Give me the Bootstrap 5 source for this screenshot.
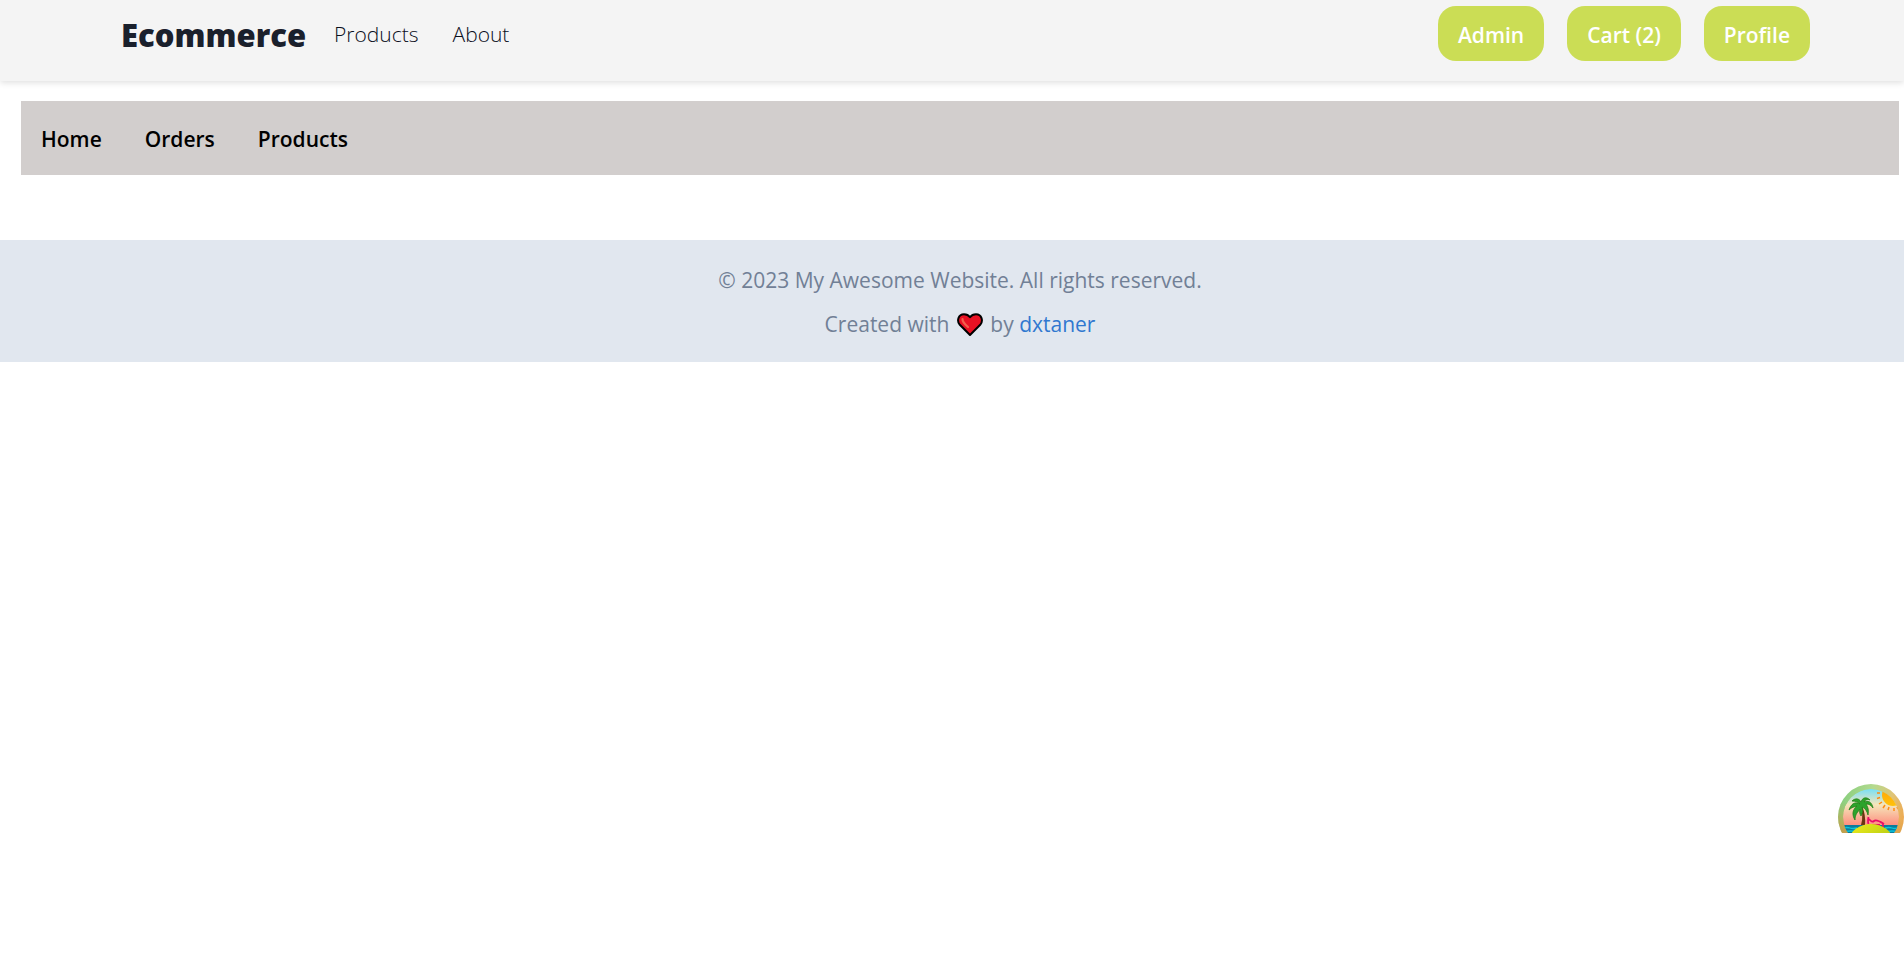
<!DOCTYPE html>
<html lang="en">
<head>
<meta charset="utf-8">
<meta name="viewport" content="width=device-width, initial-scale=1">
<title>Ecommerce</title>
<link href="https://cdn.jsdelivr.net/npm/bootstrap@5.3.0/dist/css/bootstrap.min.css" rel="stylesheet">
<style>
  body { font-family: "Open Sans", "Noto Sans", sans-serif; font-size: 21px; line-height: 30px; background: #fff; }
  a { text-decoration: none; }
  .site-header { background: #f4f4f4; box-shadow: 0 2px 6px rgba(0, 0, 0, .12); padding: 6px 94px 17px 121px; min-height: 81px; }
  .site-header .navbar-brand { font-size: 31px; line-height: 58px; font-weight: 800; color: #1a202c; padding: 0; margin: 0 20px 0 0; }
  .site-header .nav-link { color: #0b0f1c; font-weight: 300; line-height: 57px; padding: 0; }
  .main-links { gap: 18px; }
  .header-actions { gap: 23px; }
  .btn-lime { background: #cbdd55; color: #fff; font-size: 21px; line-height: 31px; font-weight: 600; border: 0; border-radius: 18px; padding: 14px 20px 10px; }
  .btn-lime:hover { background: #bccf45; color: #fff; }
  .admin-bar { background: #d2cecd; margin: 20px 5px 65px 21px; padding: 23px 20px 21px; gap: 43px; }
  .admin-bar a { color: #000; font-weight: 600; }
  .site-footer { background: #e1e7ef; color: #718096; padding: 25px 5px 22px 21px; }
  .site-footer p { margin: 0 0 13px; line-height: 31px; }
  .site-footer a { color: #3078d0; }
  .heart { width: 26px; height: 24px; margin: 0 2px; vertical-align: -5px; }
  .palm-toggle { right: 0; bottom: 133px; width: 66px; height: 49px; overflow: hidden; border: 0; padding: 0; background: none; }
</style>
</head>
<body>
<header>
  <nav class="site-header navbar navbar-expand d-flex align-items-start" aria-label="Main">
    <a class="navbar-brand" href="#">Ecommerce</a>
    <div class="main-links navbar-nav me-auto">
      <a class="nav-link" href="#">Products</a>
      <a class="nav-link" href="#">About</a>
    </div>
    <div class="header-actions d-flex">
      <button type="button" class="btn btn-lime">Admin</button>
      <button type="button" class="btn btn-lime">Cart (2)</button>
      <button type="button" class="btn btn-lime">Profile</button>
    </div>
  </nav>
</header>
<main>
  <nav class="admin-bar d-flex" aria-label="Admin">
    <a href="#">Home</a>
    <a href="#">Orders</a>
    <a href="#">Products</a>
  </nav>
</main>
<footer class="site-footer text-center">
  <p>© 2023 My Awesome Website. All rights reserved.</p>
  <p class="mb-0">Created with <svg class="heart" viewBox="0 0 26 24" role="img" aria-label="love"><path d="M13 22 2.800 11.800C-.5 8 1.200 1.300 7 1.300c2.500 0 4.600 1 6 3 1.400-2 3.500-3 6-3 5.800 0 7.500 6.700 4.200 10.500Z" fill="#e81123" stroke="#000" stroke-width="2" stroke-linejoin="round"/><path d="M5.500 6c-.2 3 2.500 5.500 5.500 8" fill="none" stroke="#f2604c" stroke-width="2.200" stroke-linecap="round"/></svg> by <a href="#">dxtaner</a></p>
</footer>

<button type="button" class="palm-toggle position-fixed" aria-label="Open developer tools">
  <svg class="d-block" width="66" height="49" viewBox="0 0 66 49" aria-hidden="true">
    <defs>
      <linearGradient id="rim" x1="0" y1=".2" x2="1" y2=".5"><stop offset="0" stop-color="#83cd7c"/><stop offset=".45" stop-color="#b4da8f"/><stop offset=".75" stop-color="#e0c477"/><stop offset="1" stop-color="#edaa52"/></linearGradient>
      <linearGradient id="rimleft" x1=".3" y1="0" x2="0" y2="1"><stop offset=".3" stop-color="#c8a04a" stop-opacity="0"/><stop offset=".7" stop-color="#cb9440" stop-opacity=".8"/></linearGradient>
      <linearGradient id="sky" x1="0" y1="0" x2="0" y2="1"><stop offset="0" stop-color="#78dff5"/><stop offset=".28" stop-color="#f5e6bb"/><stop offset=".62" stop-color="#fd9583"/><stop offset="1" stop-color="#f9596a"/></linearGradient>
      <linearGradient id="sand" x1="0" y1="0" x2="1" y2="1"><stop offset="0" stop-color="#f0ec1b"/><stop offset="1" stop-color="#9fc112"/></linearGradient>
      <linearGradient id="sun" x1="0" y1="0" x2="0" y2="1"><stop offset="0" stop-color="#ff9f05"/><stop offset="1" stop-color="#ffc20c"/></linearGradient>
      <clipPath id="inner"><circle cx="33" cy="33" r="28"/></clipPath>
    </defs>
    <circle cx="33" cy="33" r="33" fill="url(#rim)"/>
    <circle cx="33" cy="33" r="33" fill="url(#rimleft)"/>
    <g clip-path="url(#inner)">
      <circle cx="33" cy="33" r="28" fill="url(#sky)"/>
      <circle cx="55" cy="11" r="11" fill="url(#sun)"/>
      <path d="M39 9h3M39 14.500l3-1M41 20l3-2M45 24l2-3M50 26l1-3M56 27v-3M60 25l-1-2" stroke="#ff8a12" stroke-width="1.500"/>
      <path d="M0 41h67v8H0z" fill="#087c9c"/>
      <path d="M5 44q4-1 7 0t7 0M47 44q4-1 7 0t7 0M7 47.500q5-1 12 0M49 47.500q5-1 10 0" stroke="#0bc4da" stroke-width="1.300" fill="none"/>
      <path d="M22 22q4 9 1 19h4q1-10-3-19Z" fill="#6a3510"/>
      <path d="M22 20c-5-3-9 0-11 6 3-3 5-3 8-4-5 4-5 9-2 14 0-6 3-8 5-11-1 3 0 5 1 7 2-4 2-5 1-9 3 1 5 4 6 8 1-5 0-8-2-11 3 0 5 1 7 4-1-6-5-8-9-6 2-3 4-3 6-2-4-4-8-2-9 2-2-4-6-4-9-1 4 0 6 1 8 3Z" fill="#2ca32c" stroke="#287f1b" stroke-width=".8"/>
      <path d="M30.500 33q-1 5 0 7M31 35q3 4 5 2t10 3M33 41h9M45 39v4" fill="none" stroke="#e80c68" stroke-width="1.800"/>
      <ellipse cx="33" cy="55" rx="21" ry="15" fill="url(#sand)"/>
    </g>
  </svg>
</button>
<script src="https://cdn.jsdelivr.net/npm/bootstrap@5.3.0/dist/js/bootstrap.bundle.min.js"></script>
</body>
</html>
